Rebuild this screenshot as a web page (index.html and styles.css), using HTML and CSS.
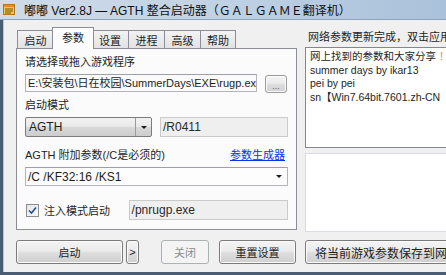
FILE: index.html
```html
<!DOCTYPE html>
<html lang="zh-CN">
<head>
<meta charset="UTF-8">
<title>嘟嘟 Ver2.8J — AGTH 整合启动器</title>
<link rel="stylesheet" href="styles.css">
</head>
<body>
    <div class="window">
        <div class="titlebar">
            <svg class="app-icon" width="12" height="11" viewBox="0 0 12 11">
                <rect x="0.5" y="0.5" width="11" height="10" fill="#f6c842" stroke="#b07a1c"/>
                <rect x="1" y="1" width="10" height="2" fill="#e88a2a"/>
                <line x1="2" y1="5" x2="10" y2="5" stroke="#7a4e12"/>
                <line x1="2" y1="7" x2="10" y2="7" stroke="#7a4e12"/>
                <line x1="2" y1="9" x2="8" y2="9" stroke="#7a4e12"/>
            </svg>
            <span class="title">嘟嘟 Ver2.8J — AGTH 整合启动器（ＧＡＬＧＡＭＥ翻译机）</span>
        </div>
        <div class="client">
            <div class="main">
                <div class="left">
                    <div class="tabs">
                        <div class="tab">启动</div>
                        <div class="tab selected">参数</div>
                        <div class="tab">设置</div>
                        <div class="tab">进程</div>
                        <div class="tab">高级</div>
                        <div class="tab">帮助</div>
                    </div>
                    <div class="panel">
                        <div class="label">请选择或拖入游戏程序</div>
                        <div class="row">
                            <div class="input path">E:\安装包\日在校园\SummerDays\EXE\rugp.ex</div>
                            <div class="btn browse">...</div>
                        </div>
                        <div class="label">启动模式</div>
                        <div class="row mode-row">
                            <div class="combo mode">
                                <span class="combo-text">AGTH</span>
                                <span class="combo-arrow"><i class="arrow"></i></span>
                            </div>
                            <div class="input grey region">/R0411</div>
                        </div>
                        <div class="label split">
                            <span>AGTH 附加参数(/C是必须的)</span>
                            <a class="link">参数生成器</a>
                        </div>
                        <div class="combo edit">
                            <span class="combo-text">/C /KF32:16 /KS1</span>
                            <i class="arrow"></i>
                        </div>
                        <div class="row inject-row">
                            <span class="check">
                                <svg width="9" height="9" viewBox="0 0 9 9"><path d="M1 4.5 L3.5 7 L8 1.5" fill="none" stroke="#2a4d8f" stroke-width="1.6"/></svg>
                            </span>
                            <span class="check-label">注入模式启动</span>
                            <div class="input grey inject">/pnrugp.exe</div>
                        </div>
                    </div>
                </div>
                <div class="right">
                    <div class="notice">网络参数更新完成，双击应用</div>
                    <div class="log">
                        <div>网上找到的参数和大家分享 <span class="mark">！</span></div>
                        <div>summer days by ikar13</div>
                        <div>pei by pei</div>
                        <div>sn【Win7.64bit.7601.zh-CN</div>
                    </div>
                    <div class="log2"></div>
                </div>
            </div>
            <div class="actions">
                <div class="btn start">启动</div>
                <div class="btn more">&gt;</div>
                <div class="btn close disabled">关闭</div>
                <div class="btn reset">重置设置</div>
                <div class="btn save">将当前游戏参数保存到网络</div>
            </div>
        </div>
    </div>
</body>
</html>
```

FILE: styles.css
```css
body {
    margin: 0;
    padding: 0;
    width: 446px;
    height: 275px;
    overflow: hidden;
    font-family: "Liberation Sans", "Noto Sans CJK SC", sans-serif;
    font-size: 11px;
    color: #1e1e1e;
    background-color: #f0f0f0;
}

.window {
    display: flex;
    flex-direction: column;
    height: 275px;
}

/* Заголовок вікна */
.titlebar {
    height: 19px;
    display: flex;
    align-items: center;
    gap: 9px;
    padding-left: 3px;
    background: linear-gradient(to right, #cfdbe8 0%, #c2d3e5 45%, #a9c1da 100%);
    border-bottom: 1px solid #8ea4bc;
}

.app-icon {
    flex: none;
}

.title {
    font-size: 12px;
    white-space: nowrap;
    color: #101010;
}

.client {
    flex: 1;
    display: flex;
    flex-direction: column;
    border-left: 3px solid #4a5d74;
    border-bottom: 3px solid #4a5d74;
    padding-left: 1px;
    box-shadow: inset 1px 0 0 #b9c6d4;
    overflow: hidden;
}

.main {
    display: flex;
    gap: 8px;
    padding-left: 12px;
}

.left {
    width: 281px;
    flex: none;
    padding-top: 7px;
}

/* Вкладки */
.tabs {
    display: flex;
    align-items: flex-end;
    height: 21px;
    padding-left: 1px;
    position: relative;
    z-index: 1;
}

.tab {
    height: 18px;
    width: 36px;
    box-sizing: border-box;
    display: flex;
    align-items: center;
    justify-content: center;
    border: 1px solid #8b8e96;
    border-bottom: none;
    border-right: none;
    background: linear-gradient(#f3f3f3, #e2e2e2);
    font-size: 11px;
}

.tab:last-child {
    border-right: 1px solid #8b8e96;
}

.tab.selected {
    height: 22px;
    width: 42px;
    margin: 0 -2px 0 -1px;
    border-right: 1px solid #8b8e96;
    background: #fcfcfc;
    margin-bottom: -1px;
    padding-bottom: 3px;
    position: relative;
    z-index: 2;
}

.tab.selected + .tab {
    border-left: none;
}

.panel {
    height: 182px;
    box-sizing: border-box;
    border: 1px solid #8b8e96;
    background: #fbfbfb;
    padding: 5px 8px 0 8px;
}

.label {
    height: 17px;
    line-height: 17px;
}

.label.split {
    display: flex;
    justify-content: space-between;
    padding-right: 3px;
    margin-top: 10px;
}

.link {
    color: #0b2ff0;
    text-decoration: underline;
}

.row {
    display: flex;
    align-items: center;
}

.input {
    box-sizing: border-box;
    height: 18px;
    line-height: 16px;
    border: 1px solid #b3b5ba;
    border-top-color: #9da0a6;
    background: #fafafa;
    padding-left: 2px;
    white-space: nowrap;
    overflow: hidden;
}

.input.path {
    width: 232px;
    margin-top: 3px;
    margin-bottom: 5px;
}

.input.grey {
    background: #efefef;
    border-color: #cacaca;
    color: #2a2a2a;
}

.mode-row {
    gap: 8px;
    margin-top: 3px;
}

.region {
    width: 128px;
    height: 20px;
    line-height: 18px;
    font-size: 12px;
}

/* Кнопки */
.btn {
    box-sizing: border-box;
    flex: none;
    display: flex;
    align-items: center;
    justify-content: center;
    border: 1px solid #7b7b7b;
    border-radius: 3px;
    background: linear-gradient(#f4f4f4 0%, #ebebeb 45%, #dddddd 55%, #cfcfcf 100%);
    box-shadow: inset 0 0 0 1px #fbfbfb;
    white-space: nowrap;
}

.browse {
    width: 22px;
    height: 18px;
    margin-left: 8px;
    margin-top: 4px;
    margin-bottom: 4px;
    font-size: 9px;
    color: #666;
    padding-top: 3px;
    border-color: #9a9a9a;
}

.combo {
    box-sizing: border-box;
    display: flex;
    align-items: center;
}

.combo.mode {
    width: 127px;
    height: 20px;
    border: 1px solid #7b7b7b;
    border-radius: 2px;
    background: linear-gradient(#f2f2f2 0%, #e8e8e8 50%, #d8d8d8 51%, #cdcdcd 100%);
    font-size: 12px;
}

.combo-text {
    flex: 1;
    padding-left: 3px;
}

.combo-arrow {
    width: 15px;
    height: 100%;
    border-left: 1px solid #9a9a9a;
    display: flex;
    align-items: center;
    justify-content: center;
}

.arrow {
    width: 0;
    height: 0;
    border-left: 3px solid transparent;
    border-right: 3px solid transparent;
    border-top: 3px solid #1a1a1a;
}

.combo.edit {
    width: 263px;
    height: 19px;
    margin-top: 3px;
    border: 1px solid #b3b5ba;
    border-top-color: #9da0a6;
    background: #fdfdfd;
    font-size: 12px;
    padding-right: 5px;
}

.combo.edit .combo-text {
    padding-left: 2px;
}

.inject-row {
    margin-top: 14px;
}

.check {
    box-sizing: border-box;
    width: 13px;
    height: 13px;
    margin-left: 1px;
    border: 1px solid #8f8f8f;
    background: linear-gradient(135deg, #dfe4ea, #fbfbfb);
    display: flex;
    align-items: center;
    justify-content: center;
}

.check-label {
    margin-left: 5px;
    width: 85px;
    font-size: 11px;
}

.inject {
    width: 160px;
    height: 20px;
    line-height: 18px;
    font-size: 12px;
}

/* Права колонка */
.right {
    flex: 1;
    min-width: 0;
    padding-top: 9px;
}

.notice {
    height: 17px;
    line-height: 17px;
    white-space: nowrap;
    padding-left: 3px;
}

.log {
    height: 101px;
    box-sizing: border-box;
    margin-top: 1px;
    border: 1px solid #838890;
    border-right: none;
    background: #ffffff;
    padding: 2px 0 0 4px;
    white-space: nowrap;
    overflow: hidden;
    line-height: 13.5px;
    font-size: 10.5px;
}

.mark {
    color: #e69320;
}

.log2 {
    height: 77px;
    margin-top: 5px;
    border: 1px solid #d9dde2;
    border-right: none;
    background: #ffffff;
}

/* Нижній ряд кнопок */
.actions {
    display: flex;
    margin-top: 8px;
    padding-left: 12px;
    height: 24px;
}

.actions .btn {
    height: 24px;
    font-size: 11px;
}

.start {
    width: 107px;
}

.more {
    width: 13px;
    margin-left: 3px;
    font-size: 10px;
}

.close {
    width: 48px;
    margin-left: 22px;
}

.btn.disabled {
    background: #f4f4f4;
    border-color: #adb2b5;
    box-shadow: none;
    color: #8d8d8d;
}

.reset {
    width: 77px;
    margin-left: 10px;
}

.actions .save {
    width: 170px;
    margin-left: 9px;
    justify-content: flex-start;
    padding-left: 9px;
    font-size: 12px;
}
```
